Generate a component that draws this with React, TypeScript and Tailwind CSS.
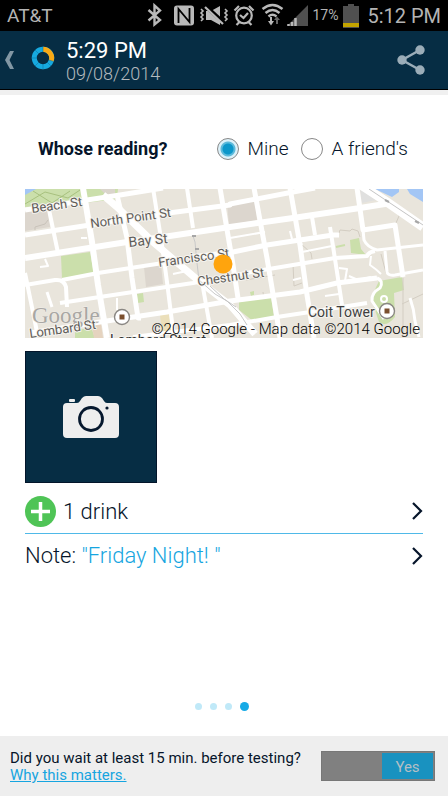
import { useState } from 'react';

const FONT = "font-['Roboto','Liberation_Sans',sans-serif]";

// [path, stroke width]
const streets: [string, number][] = [
  ['M0 21L62 11L95 6L138 -1', 5],
  ['M0 46L65 36L105 29L205 16V15L268 3L290 -1', 5],
  ['M0 69L102 53L138 48L205 38L268 29L335 19L366 14', 6],
  ['M0 96L30 91Q39 90 41 98L42 118', 4],
  ['M37 91L73 84L138 74', 4],
  ['M167 68L208 63L242 56L308 46H314', 5],
  ['M35 114L108 103L168 94L238 81L310 69L342 67Q344 63 350 62', 4],
  ['M5 144L75 133L142 123L205 112L275 103L312 94L352 89', 5],
  ['M108 148L205 136L252 128L285 123L342 114', 4],
  ['M0 84L13 148', 4],
  ['M23 16L33 64', 4],
  ['M58 -1L67 53L73 96L82 149', 6],
  ['M92 6L102 49L107 89L113 129H116', 5],
  ['M128 -1L137 56L142 93L149 149', 4],
  ['M162 -1L168 39', 4],
  ['M177 93L187 149', 4],
  ['M195 -1L208 76L213 109', 5],
  ['M229 -1L242 69L252 129L255 149', 5],
  ['M265 -1L275 56L282 106L289 149', 5],
  ['M287 28L290 46', 4],
  ['M305 38L312 83L317 116', 4],
  ['M332 -1L338 41L370 36L378 88', 5],
  ['M338 41L339 51Q342 58 352 61L398 56', 3],
  ['M360 62L362 83Q363 87 370 86L398 81', 3],
  ['M352 89Q359 92 355 99Q346 104 347 112L359 130', 3],
  ['M385 109Q389 120 390 132L394 148', 3],
  ['M346 67L345 76Q351 80 356 85', 2],
  ['M20 70L23 77L15 78', 2],
  ['M22 103L27 118', 3],
  ['M56 49H62', 2],
  ['M148 85L162 82', 2],
  ['M205 49L240 43', 2],
  ['M277 63L307 57', 2],
  ['M277 56L275 52L290 50', 2],
  ['M314 79L322 80L320 92', 2],
  ['M324 87L333 91L346 88', 2],
  ['M300 107L314 105', 2],
  ['M92 109V121', 2],
  ['M265 42L267 50', 2],
  ['M268 91L276 89', 2],
];

const DataMap = () => (
  <svg
    viewBox="0 0 398 149"
    preserveAspectRatio="xMidYMid slice"
    className="block h-[149px] w-full bg-[#e9e5dc]"
    role="img"
    aria-label="Map"
  >
    <rect width="398" height="149" fill="#e9e5dc" />
    <path d="M0 0H93L92 10L60 14L0 18Z" fill="#cbdfab" />
    <path d="M0 0H11L0 6Z" fill="#a3c6f5" />
    <path d="M74 -1H90V8L80 5Z" fill="#dad5cc" />
    <path d="M0 15L20 3L43 9L55 1M8 2L27 14L45 2" fill="none" stroke="#a8c17f" strokeWidth="1" />
    <path d="M0 22L23 19L25 38L0 42Z" fill="#dcd6ce" />
    <path d="M10 41V38L20 35L23 31" fill="none" stroke="#c9c3ba" />
    <path d="M36 67L65 63L69 85L37 90Z" fill="#cbdfab" />
    <path d="M119 78L136 75L138 95L121 98Z" fill="#dcd6ce" />
    <path d="M112 105L118 104L119 113L113 114Z" fill="#cbdfab" />
    <path d="M50 142L66 138L70 149H50Z" fill="#cbdfab" />
    <path d="M67 137L76 135L78 149H69Z" fill="#e5d3bf" />
    <path d="M135 126L144 125L147 143L137 144Z" fill="#ebdfba" />
    <path d="M202 14L230 11L232 31L204 36Z" fill="#dcd6ce" />
    <path d="M214 113L246 108L249 128L228 132L214 121Z" fill="#cbdfab" />
    <path d="M225 103L229 102V106L226 107Z" fill="#cbdfab" />
    <path d="M325 51L334 49L336 60L341 66L326 64Z" fill="#cbdfab" />
    <path d="M311 58L320 56" stroke="#cbdfab" strokeWidth="2" />
    <path d="M354 92L377 88L379 101L369 104L370 128Q361 139 354 133L346 109Z" fill="#cbdfab" />
    <path d="M335 0L351 11L337 14Z" fill="#e0e0df" />
    <path d="M350 0L367 8L374 3V0Z" fill="#a3c6f5" />
    <path d="M382 0H398V13L385 5Z" fill="#a3c6f5" />
    <path d="M314 44L315 41L325 42L327 40L333 42L335 48M356 65L361 84M275 54L286 64L287 70M268 75L269 97L277 94M221 91L250 86M377 20L371 34M377 115L398 105M378 89V148M238 103L239 111" fill="none" stroke="#d3cdc2" />
    <g fill="none" stroke="#ffffff" strokeLinejoin="round">
      {streets.map(([d, width]) => (
        <path key={d} d={d} strokeWidth={width} />
      ))}
      <path d="M78 6L92 18L128 53L175 93L205 116L230 145" strokeWidth="7" />
      <path d="M336 -4L362 13L398 38" strokeWidth="9" />
      <circle cx="359" cy="110" r="3" strokeWidth="2" />
    </g>
    <path d="M168 47L170 53L172 74L174 91L190 105L202 112L215 125L222 136" fill="none" stroke="#c9c9c9" strokeWidth="1" />
    <path d="M185 97L199 110L211 118M344 0L362 12L398 36" fill="none" stroke="#c4c4c4" strokeWidth="1" />
    <path d="M167 47H171M170 60H174M360 11L364 13M390 32L394 34" stroke="#a7a7a7" strokeWidth="2" />

    <text x="7" y="134" fontSize="23" className="font-['Liberation_Serif',serif]" fill="#a9a7a3" stroke="#f1efeb" strokeWidth="1" paintOrder="stroke">
      Google
    </text>
    <g className={FONT} fontSize="13" fill="#5f5c58" stroke="#f6f4f0" strokeWidth="2" paintOrder="stroke" strokeLinejoin="round">
      <text transform="translate(7 24) rotate(-8)">Beach St</text>
      <text transform="translate(66 39) rotate(-8)">North Point St</text>
      <text transform="translate(104 58) rotate(-6)" fontSize="14">Bay St</text>
      <text transform="translate(134 78) rotate(-8)">Francisco St</text>
      <text transform="translate(173 97) rotate(-8)">Chestnut St</text>
      <text transform="translate(5 149) rotate(-8)">Lombard St</text>
      <text x="85" y="156" fontSize="14" fill="#333333">Lombard Street</text>
      <text x="283" y="128" fontSize="14" fill="#3f3f3f">Coit Tower</text>
    </g>
    {[[97, 128], [362, 122]].map(([x, y]) => (
      <g key={x}>
        <circle cx={x} cy={y} r="7.5" fill="#ffffff" stroke="#8a8783" strokeWidth="1.4" />
        <path d={`M${x - 2.5} ${y - 2.5}h5v5h-5Z`} fill="#7b4f2e" />
      </g>
    ))}
    <circle cx="198" cy="75" r="9.5" fill="#ffa40d" />
    <text x="395" y="145" textAnchor="end" fontSize="15" className={`${FONT} font-light`} fill="#000000">
      ©2014 Google - Map data ©2014 Google
    </text>
  </svg>
);

const StatusBar = () => (
  <div className="flex h-[31px] items-center justify-between bg-black px-[7px] text-[#b4b4b4]">
    <span className="pt-px text-[19px]">AT&amp;T</span>
    <div className="flex items-center">
      {/* bluetooth, nfc, muted, alarm, wifi, signal */}
      <svg width="162" height="31" viewBox="146 0 162 31" fill="none" stroke="#b9b9b9" aria-hidden="true">
        <path d="M148.500 10L160 20L154.500 24.500V5.500L160 10.500L148.500 20.500" strokeWidth="2.400" />
        <rect x="174" y="5.500" width="20" height="20" rx="3" fill="#b9b9b9" stroke="none" />
        <path d="M178.500 23V9L189.500 22V8" stroke="#000000" strokeWidth="1.800" />
        <path d="M206 11H211L220 6V25L211 20H206Z" fill="#b9b9b9" stroke="none" />
        <path d="M205 5.500L224 23" stroke="#000000" strokeWidth="4" />
        <path d="M205 7L223 24" strokeWidth="2.200" />
        <path d="M201 9L203 11L201 13L203 15L201 17L203 19L201 21M225 9L227 11L225 13L227 15L225 17L227 19L225 21" strokeWidth="1.600" />
        <circle cx="244" cy="15.500" r="7.800" strokeWidth="2.200" />
        <path d="M240 15L243.500 18L248 13M234.500 10.500L239 6M249 6L253.500 10.500M239.500 22L236.500 25M248.500 22L251.500 25" strokeWidth="2.200" />
        <path d="M262.500 9Q272.500 1 282.500 9M265.500 13Q272.500 7 279.500 13M268.500 16.500Q272.500 13 276.500 16.500" strokeWidth="2.400" />
        <path d="M271 17V23" strokeWidth="2" />
        <path d="M268 21H274L271 25.500Z" fill="#b9b9b9" stroke="none" />
        <path d="M274 20L277 16.500L280 20H278V24H276V20Z" fill="#666666" stroke="none" />
        <path d="M308 5V26H287Z" fill="#505050" stroke="none" />
        <path d="M288.500 26V24M292 26V22M295.500 26V18" strokeWidth="2.500" />
      </svg>
      <span className="pl-1 text-[14px]">17%</span>
      <svg width="16" height="24" viewBox="0 0 16 24" className="ml-[5px]" aria-hidden="true">
        <path d="M5 0H11V2H16V24H0V2H5Z" fill="#505050" />
        <path d="M0 19H16V23H0Z" fill="#c3a400" />
      </svg>
      <span className="pl-2 text-[20px]">5:12 PM</span>
    </div>
  </div>
);

const Chevron = () => (
  <svg width="12" height="18" viewBox="0 0 12 18" fill="none" stroke="#06152a" strokeWidth="2.200" aria-hidden="true">
    <path d="M2 1L10 9L2 17" />
  </svg>
);

export default function App() {
  const [whose, setWhose] = useState('Mine');
  const [waited, setWaited] = useState(true);

  return (
    <div className={`${FONT} flex min-h-screen flex-col bg-white text-[#06152a]`}>
      <StatusBar />

      {/* Header */}
      <header className="flex h-[59px] items-center justify-between border-b border-black bg-[#062d44] pr-[22px] pl-[5px]">
        <div className="flex items-center">
          <button type="button" aria-label="Back">
            <svg width="10" height="18" viewBox="0 0 10 18" fill="#8297a4">
              <path d="M5 0H9L4.500 9L9 18H5L0 9Z" />
            </svg>
          </button>
          <svg width="24" height="24" viewBox="0 0 24 24" fill="none" strokeWidth="5" className="mb-1 ml-4" aria-hidden="true">
            <circle cx="12" cy="12" r="8.700" stroke="#16a9df" />
            <path d="M12 3.300A8.700 8.700 0 0 1 20.200 14.800" stroke="#f9aa16" />
            <path d="M12 0V6M0 12H6M12 18V24M18 14L23 15.500M16 16L20 20M8 16L4 20M8 8L4 4" stroke="#0b6f9a" strokeWidth=".5" />
          </svg>
          <div className="ml-[11px] pt-1">
            <h1 className="text-[22px] leading-6 text-white">5:29 PM</h1>
            <p className="text-[18px] leading-[22px] font-light text-[#b4babe]">09/08/2014</p>
          </div>
        </div>
        <button type="button" aria-label="Share">
          <svg width="30" height="32" viewBox="0 0 30 32" fill="#9badb8" stroke="#9badb8" strokeWidth="2.500">
            <path d="M24 6L6 16L24 26" fill="none" />
            <circle cx="24" cy="6" r="4.700" stroke="none" />
            <circle cx="6" cy="16" r="4.700" stroke="none" />
            <circle cx="24" cy="26" r="4.700" stroke="none" />
          </svg>
        </button>
      </header>
      <div className="h-[5px] bg-[#f0f0f0]" />

      <main className="flex flex-1 flex-col px-[25px]">
        {/* Whose reading */}
        <fieldset className="mt-[41px] mb-[27px] flex h-[26px] items-center justify-between pr-[15px] pl-[13px]">
          <legend className="float-left text-[18px] leading-[26px] font-bold">Whose reading?</legend>
          <div className="flex gap-3">
            {['Mine', "A friend's"].map((name) => (
              <label key={name} className="flex items-center gap-[9px] text-[19px] leading-[26px] font-light">
                <input
                  type="radio"
                  name="whose"
                  checked={whose === name}
                  onChange={() => setWhose(name)}
                  className="size-[22px] appearance-none rounded-full border border-[#888888] bg-white checked:bg-[radial-gradient(circle,#0c97ca_0_5px,#5cbadb_6px_7px,#ddf1f9_8px)]"
                />
                {name}
              </label>
            ))}
          </div>
        </fieldset>

        <DataMap />

        {/* Photo */}
        <button
          type="button"
          aria-label="Add photo"
          className="mt-[13px] flex size-[132px] items-center justify-center border border-[#03152a] bg-[#062d44]"
        >
          <svg width="58" height="44" viewBox="0 0 58 44">
            <path
              d="M5 8H15Q17 8 18 6L20 3Q22 1 24 1H36Q38 1 40 3L42 6Q43 8 45 8H53Q57 8 57 12V39Q57 43 53 43H5Q1 43 1 39V12Q1 8 5 8Z"
              fill="#eeeeee"
            />
            <rect x="7" y="4" width="6" height="3" rx="1" fill="#eeeeee" />
            <circle cx="29" cy="24" r="11.500" fill="none" stroke="#06182e" strokeWidth="2.800" />
            <circle cx="45" cy="13" r="1.600" fill="#06182e" />
          </svg>
        </button>

        <button type="button" className="mt-[6px] flex h-[45px] items-center border-b border-[#4fb9e8] text-left text-[22px] font-light">
          <svg width="31" height="31" viewBox="0 0 31 31" className="mr-[7px]" aria-hidden="true">
            <circle cx="15.500" cy="15.500" r="15.500" fill="#4fc456" />
            <path d="M15.500 6V25M6 15.500H25" stroke="#ffffff" strokeWidth="3.500" />
          </svg>
          <span className="flex-1">1 drink</span>
          <Chevron />
        </button>
        <button type="button" className="flex h-[43px] items-center text-left text-[22px] font-light">
          <span className="flex-1">
            Note: <span className="text-[#16a5e0]">&quot;Friday Night! &quot;</span>
          </span>
          <Chevron />
        </button>

        {/* Pager */}
        <div className="mt-auto mb-[25px] flex h-[10px] items-center justify-center gap-2 pr-1">
          <span className="size-[7px] rounded-full bg-[#c0e9f8]" />
          <span className="size-[7px] rounded-full bg-[#c0e9f8]" />
          <span className="size-[7px] rounded-full bg-[#c0e9f8]" />
          <span className="size-[9px] rounded-full bg-[#16aae6]" />
        </div>
      </main>

      {/* Footer */}
      <footer className="flex h-[60px] items-center justify-between bg-[#eeeeee] pr-[13px] pl-[10px] text-[15px] leading-[17px]">
        <div className="pt-[2px]">
          <p>Did you wait at least 15 min. before testing?</p>
          <a href="#why" className="text-[#16a5e0] underline">Why this matters.</a>
        </div>
        <button
          type="button"
          role="switch"
          aria-checked={waited}
          aria-label="Waited at least 15 minutes"
          onClick={() => setWaited(!waited)}
          className={`flex h-[30px] w-[114px] border border-[#777777] bg-[#808080] p-px ${waited ? 'justify-end' : 'justify-start'}`}
        >
          <span className="flex h-full w-[51px] items-center justify-center bg-[#1992c0] pt-[2px] text-[#b4bfc5]">
            {waited ? 'Yes' : 'No'}
          </span>
        </button>
      </footer>
    </div>
  );
}
